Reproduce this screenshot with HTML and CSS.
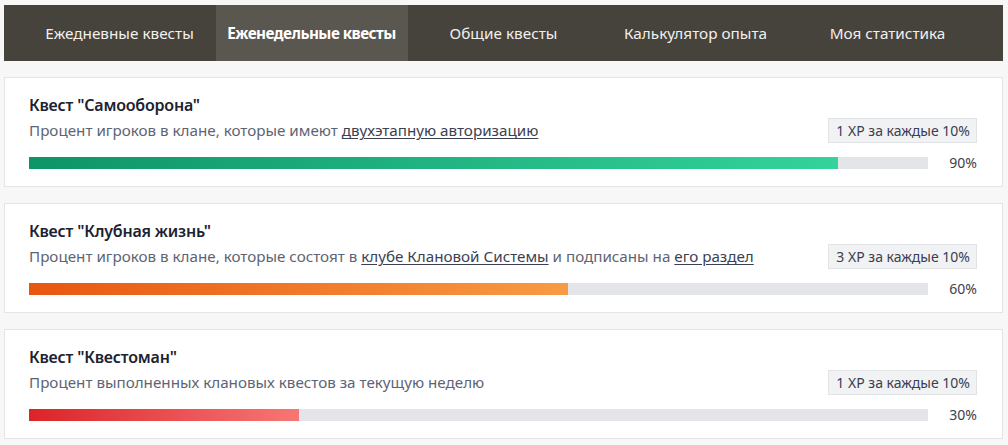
FILE: index.html
```html
<!DOCTYPE html>
<html lang="ru">
<head>
    <meta charset="UTF-8">
    <meta name="viewport" content="width=device-width, initial-scale=1.0">
    <title>Квесты клана</title>
    <link rel="stylesheet" href="styles.css">
</head>
<body>

    <nav class="tabs">
        <a class="tab">Ежедневные квесты</a>
        <a class="tab active">Еженедельные квесты</a>
        <a class="tab">Общие квесты</a>
        <a class="tab">Калькулятор опыта</a>
        <a class="tab">Моя статистика</a>
    </nav>

    <div class="quest">
        <h3>Квест "Самооборона"</h3>
        <div class="quest-row">
            <p>Процент игроков в клане, которые имеют <a href="#">двухэтапную авторизацию</a></p>
            <span class="reward">1 XP за каждые 10%</span>
        </div>
        <div class="progress">
            <div class="track"><div class="fill green" style="width: 90%"></div></div>
            <span class="value">90%</span>
        </div>
    </div>

    <div class="quest">
        <h3>Квест "Клубная жизнь"</h3>
        <div class="quest-row">
            <p>Процент игроков в клане, которые состоят в <a href="#">клубе Клановой Системы</a> и подписаны на <a href="#">его раздел</a></p>
            <span class="reward">3 XP за каждые 10%</span>
        </div>
        <div class="progress">
            <div class="track"><div class="fill orange" style="width: 60%"></div></div>
            <span class="value">60%</span>
        </div>
    </div>

    <div class="quest">
        <h3>Квест "Квестоман"</h3>
        <div class="quest-row">
            <p>Процент выполненных клановых квестов за текущую неделю</p>
            <span class="reward">1 XP за каждые 10%</span>
        </div>
        <div class="progress">
            <div class="track"><div class="fill red" style="width: 30%"></div></div>
            <span class="value">30%</span>
        </div>
    </div>

</body>
</html>
```

FILE: styles.css
```css
body {
    font-family: 'Noto Sans', 'Open Sans', sans-serif;
    background-color: #f7f7f7;
    margin: 0;
    padding: 5px 5px 0 4px;
}

.tabs {
    display: flex;
    justify-content: center;
    height: 56px;
    background-color: #46423c;
    margin-bottom: 16px;
}

.tab {
    width: 192px;
    display: flex;
    align-items: center;
    justify-content: center;
    color: #f2f0ec;
    font-size: 15.3px;
    cursor: pointer;
}

.tab.active {
    background-color: #5a5650;
    color: #fff;
    font-weight: bold;
    letter-spacing: -0.55px;
}

.quest {
    box-sizing: border-box;
    height: 110px;
    background-color: #fff;
    border: 1px solid #e4e4e4;
    padding: 16px 25px 0 24px;
    margin-bottom: 16px;
}

.quest h3 {
    margin: 0 0 1px;
    font-size: 16px;
    font-weight: 600;
    line-height: 22px;
    color: #1d2230;
    letter-spacing: -0.2px;
}

.quest-row {
    display: flex;
    justify-content: space-between;
    align-items: center;
}

.quest p {
    margin: 0;
    font-size: 15.2px;
    line-height: 26px;
    color: #5d6473;
}

.quest p a {
    color: #3b4152;
    text-decoration: underline;
    text-underline-offset: 2px;
}

.reward {
    background-color: #f1f2f4;
    border: 1px solid #e2e3e6;
    color: #3b4050;
    font-size: 14px;
    line-height: 17px;
    padding: 3px 6px 3px 7px;
}

.progress {
    display: flex;
    align-items: center;
    margin-top: 10px;
}

.track {
    width: 899px;
    height: 12px;
    background-color: #e4e5e9;
}

.fill {
    height: 100%;
}

.fill.green {
    background: linear-gradient(to right, #0e9467, #34d39b);
}

.fill.orange {
    background: linear-gradient(to right, #e8570f, #f89a44);
}

.fill.red {
    background: linear-gradient(to right, #db2428, #f87675);
}

.value {
    flex: 1;
    text-align: right;
    font-size: 14px;
    color: #3b4050;
}
```
